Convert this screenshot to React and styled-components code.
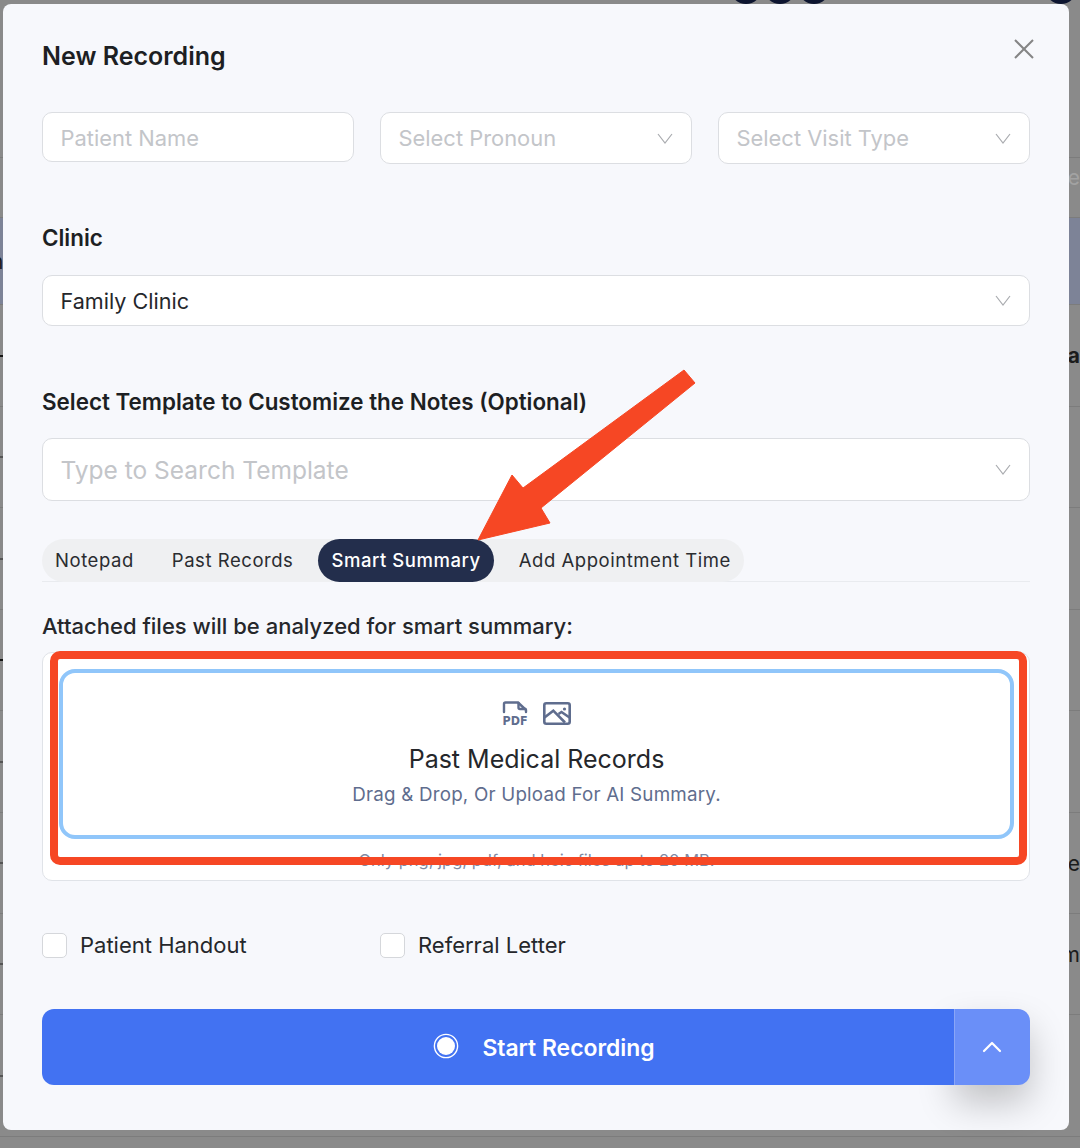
import React from "react";
import styled, { createGlobalStyle } from "styled-components";

const GlobalStyle = createGlobalStyle`
  html, body {
    margin: 0;
    padding: 0;
    background: #8a8a8a;
  }
  body {
    font-family: Inter, "Liberation Sans", sans-serif;
    overflow: hidden;
  }
`;

const backdropRows = [
  { height: 158 },
  { height: 60, right: "e", color: "#a2a2a2", offset: -20 },
  { height: 87, tint: true, left: "n" },
  { height: 102, right: "a", bold: true, bar: true },
  { height: 101, dot: true },
  { height: 102, dot: true },
  { height: 101, bar: true },
  { height: 102, dot: true },
  { height: 101, right: "e", dot: true },
  { height: 101, right: "m", offset: -20, dot: true },
  { height: 122, dot: true },
];

function Chevron() {
  return (
    <ChevronIcon viewBox="0 0 16 11">
      <polyline points="1,1 8,10 15,1" />
    </ChevronIcon>
  );
}

function PdfIcon() {
  return (
    <FileIcon viewBox="0 0 26 25">
      <path d="M2 11 V3 Q2 1.5 3.5 1.5 H16 L24 9 V11" />
      <path d="M16.5 2 V6.5 Q16.5 8 18 8 H23.5" />
      <text x="0.5" y="24" textLength="25" lengthAdjust="spacingAndGlyphs">PDF</text>
    </FileIcon>
  );
}

function ImageIcon() {
  return (
    <PictureIcon viewBox="0 0 28 23">
      <rect x="1.3" y="1.3" width="25.4" height="20.4" rx="2" />
      <path d="M1.5 15.5 L10.3 8.7 L22 20.5" />
      <path d="M15.5 12 L18.5 10 L26.5 15.5" />
      <circle cx="21.5" cy="7" r="1.6" />
    </PictureIcon>
  );
}

function App() {
  return (
    <>
      <GlobalStyle />
      <Backdrop>
        <Avatars>
          <Avatar />
          <Avatar />
          <Avatar />
          <Avatar $last />
        </Avatars>
        {backdropRows.map((row, i) => (
          <BackRow key={i} $height={row.height} $tint={row.tint} $color={row.color} $bold={row.bold}>
            <BackLeft>
              {row.left}
              {row.bar && <Mark $wide />}
              {row.dot && <Mark />}
            </BackLeft>
            <BackRight $offset={row.offset}>{row.right}</BackRight>
          </BackRow>
        ))}
      </Backdrop>

      <Modal>
        <CloseButton viewBox="0 0 20 20">
          <path d="M1 1 L19 19 M19 1 L1 19" />
        </CloseButton>
        <Title>New Recording</Title>

        <TopRow>
          <Field $height={50} $nudge={2}>
            <Placeholder>Patient Name</Placeholder>
          </Field>
          <Field $height={52}>
            <Placeholder>Select Pronoun</Placeholder>
            <Chevron />
          </Field>
          <Field $height={52}>
            <Placeholder>Select Visit Type</Placeholder>
            <Chevron />
          </Field>
        </TopRow>

        <Label $top={61}>Clinic</Label>
        <Field $height={51} $top={24}>
          <Value>Family Clinic</Value>
          <Chevron />
        </Field>

        <Label $top={63}>Select Template to Customize the Notes (Optional)</Label>
        <Field $height={63} $top={23}>
          <Placeholder $large>Type to Search Template</Placeholder>
          <Chevron />
        </Field>

        <TabBar>
          <Tabs>
            <Tab>Notepad</Tab>
            <Tab>Past Records</Tab>
            <Tab $active>Smart Summary</Tab>
            <Tab>Add Appointment Time</Tab>
          </Tabs>
        </TabBar>

        <AttachLabel>Attached files will be analyzed for smart summary:</AttachLabel>
        <DropOuter>
          <DropInner>
            <IconRow>
              <PdfIcon />
              <ImageIcon />
            </IconRow>
            <DropTitle>Past Medical Records</DropTitle>
            <DropSub>Drag &amp; Drop, Or Upload For AI Summary.</DropSub>
          </DropInner>
          <DropHint>Only png, jpg, pdf, and heic files up to 20 MB.</DropHint>
        </DropOuter>

        <Checks>
          <CheckItem>
            <CheckBox />
            <CheckText>Patient Handout</CheckText>
          </CheckItem>
          <CheckItem>
            <CheckBox />
            <CheckText>Referral Letter</CheckText>
          </CheckItem>
        </Checks>

        <RecordBar>
          <RecordMain>
            <RecordIcon viewBox="0 0 26 26">
              <circle cx="13" cy="13" r="11.6" />
              <circle className="dot" cx="13" cy="13" r="9" />
            </RecordIcon>
            <RecordText>Start Recording</RecordText>
          </RecordMain>
          <RecordToggle>
            <svg width="20" height="12" viewBox="0 0 20 12">
              <polyline points="2,10 10,2 18,10" />
            </svg>
          </RecordToggle>
        </RecordBar>
      </Modal>

      <Highlight />
      <Arrow viewBox="0 0 1080 1148">
        <polygon
          points="684,370 695,383 541,508 550,523 478,540 512,475 523,488"
          strokeLinejoin="round"
        />
      </Arrow>
    </>
  );
}

const Backdrop = styled.div`
  width: 1080px;
  height: 1148px;
  overflow: hidden;
  position: relative;
`;

const Avatars = styled.div`
  position: absolute;
  top: -28px;
  left: 730px;
  display: flex;
  gap: 2px;
`;

const Avatar = styled.div`
  width: 32px;
  height: 32px;
  margin-left: ${(p) => (p.$last ? 213 : 0)}px;
  border-radius: 50%;
  background: #0d1530;
`;

const BackRow = styled.div`
  height: ${(p) => p.$height}px;
  box-sizing: border-box;
  border-bottom: 1px solid #7c7c7c;
  background: ${(p) => (p.$tint ? "#7d8397" : "transparent")};
  display: flex;
  align-items: center;
  justify-content: space-between;
  color: ${(p) => p.$color || "#1c1c1c"};
  font-size: 21px;
  font-weight: ${(p) => (p.$bold ? 700 : 400)};
`;

const BackLeft = styled.span`
  margin-left: -9px;
  display: flex;
  align-items: center;
`;

const BackRight = styled.span`
  margin-top: ${(p) => p.$offset || 0}px;
`;

const Mark = styled.i`
  display: block;
  margin-left: 9px;
  width: 3px;
  height: 2px;
  background: ${(p) => (p.$wide ? "#151515" : "#555")};
`;

const Modal = styled.div`
  position: absolute;
  top: 4px;
  left: 3px;
  width: 1066px;
  height: 1126px;
  box-sizing: border-box;
  padding: 0 39px;
  background: #f7f8fc;
  border-radius: 8px;
`;

const CloseButton = styled.svg`
  position: absolute;
  top: 35px;
  right: 35px;
  width: 20px;
  height: 20px;
  path {
    stroke: #858585;
    stroke-width: 2;
    fill: none;
  }
`;

const Title = styled.h2`
  margin: 0;
  padding-top: 37px;
  font-size: 25px;
  line-height: 30px;
  font-weight: 600;
  color: #1d1f23;
`;

const TopRow = styled.div`
  display: grid;
  grid-template-columns: repeat(3, 312px);
  gap: 26px;
  align-items: start;
  margin-top: 41px;
`;

const Field = styled.div`
  height: ${(p) => p.$height}px;
  margin-top: ${(p) => p.$top || 0}px;
  box-sizing: border-box;
  background: #fff;
  border: 1px solid #dcdee2;
  border-radius: 10px;
  padding: ${(p) => p.$nudge || 0}px 18px 0 17.5px;
  display: flex;
  align-items: center;
  justify-content: space-between;
`;

const Placeholder = styled.span`
  font-size: ${(p) => (p.$large ? 24.5 : 21.9)}px;
  color: #c3c5c9;
`;

const Value = styled.span`
  font-size: 21.6px;
  color: #25272b;
`;

const ChevronIcon = styled.svg`
  width: 16px;
  height: 11px;
  polyline {
    fill: none;
    stroke: #a9abaf;
    stroke-width: 1.2;
  }
`;

const Label = styled.div`
  margin-top: ${(p) => p.$top}px;
  font-size: 22.4px;
  line-height: 26px;
  font-weight: 600;
  color: #1d1f23;
`;

const TabBar = styled.div`
  margin-top: 38px;
  height: 43px;
  box-sizing: border-box;
  border-bottom: 1px solid #e9ebef;
`;

const Tabs = styled.div`
  display: inline-flex;
  gap: 12px;
  height: 43px;
  background: #eff0f2;
  border-radius: 22px;
`;

const Tab = styled.div`
  display: flex;
  align-items: center;
  padding: 0 13px 2px;
  border-radius: 22px;
  font-size: 18.5px;
  font-weight: ${(p) => (p.$active ? 500 : 400)};
  letter-spacing: 0.55px;
  color: ${(p) => (p.$active ? "#fff" : "#2a2c30")};
  background: ${(p) => (p.$active ? "#232e4c" : "transparent")};
`;

const AttachLabel = styled.div`
  margin-top: 31px;
  font-size: 22px;
  line-height: 26px;
  font-weight: 500;
  color: #25272b;
`;

const DropOuter = styled.div`
  margin-top: 13px;
  height: 229px;
  box-sizing: border-box;
  background: #fff;
  border: 1px solid #e0e3e8;
  border-radius: 10px;
  padding: 16px 15px 0 16px;
`;

const DropInner = styled.div`
  height: 170px;
  box-sizing: border-box;
  border: 4px solid #90c6fa;
  border-radius: 16px;
  padding-top: 24px;
  display: flex;
  flex-direction: column;
  align-items: center;
`;

const IconRow = styled.div`
  display: flex;
  align-items: center;
  gap: 15px;
  height: 32px;
`;

const FileIcon = styled.svg`
  width: 26px;
  height: 25px;
  overflow: visible;
  path {
    fill: none;
    stroke: #5f6d8e;
    stroke-width: 2.4;
    stroke-linejoin: round;
    stroke-linecap: round;
  }
  text {
    font-family: "DejaVu Sans", sans-serif;
    font-size: 12.5px;
    font-weight: 700;
    fill: #5f6d8e;
  }
`;

const PictureIcon = styled.svg`
  width: 28px;
  height: 23px;
  rect,
  path {
    fill: none;
    stroke: #5f6d8e;
    stroke-width: 2.6;
  }
  circle {
    fill: #5f6d8e;
  }
`;

const DropTitle = styled.div`
  margin-top: 14px;
  font-size: 25px;
  line-height: 32px;
  color: #25272b;
`;

const DropSub = styled.div`
  margin-top: 8px;
  font-size: 18.8px;
  line-height: 24px;
  letter-spacing: 0.2px;
  color: #5f6d8e;
`;

const DropHint = styled.div`
  margin-top: 11px;
  text-align: center;
  font-size: 16.5px;
  line-height: 20px;
  color: #7f8aa3;
`;

const Checks = styled.div`
  display: grid;
  grid-template-columns: repeat(3, 312px);
  gap: 26px;
  margin-top: 51px;
`;

const CheckItem = styled.div`
  display: flex;
  align-items: center;
  gap: 13px;
`;

const CheckBox = styled.div`
  width: 25px;
  height: 25px;
  box-sizing: border-box;
  background: #fff;
  border: 1px solid #d5d7db;
  border-radius: 5px;
`;

const CheckText = styled.span`
  font-size: 22px;
  color: #25272b;
`;

const RecordBar = styled.div`
  margin-top: 51px;
  height: 76px;
  display: flex;
`;

const RecordMain = styled.div`
  flex: 1;
  position: relative;
  z-index: 1;
  display: flex;
  align-items: center;
  justify-content: center;
  gap: 23px;
  padding-left: 92px;
  background: #4272f2;
  border-radius: 12px 0 0 12px;
`;

const RecordIcon = styled.svg`
  width: 26px;
  height: 26px;
  margin-top: -2px;
  circle {
    fill: none;
    stroke: #fff;
    stroke-width: 1.4;
  }
  circle.dot {
    fill: #fff;
    stroke: none;
  }
`;

const RecordText = styled.span`
  padding-top: 2px;
  font-size: 22.9px;
  font-weight: 600;
  color: #fff;
`;

const RecordToggle = styled.div`
  width: 76px;
  box-sizing: border-box;
  border-left: 1px solid #8aa6f7;
  border-radius: 0 12px 12px 0;
  background: #6a8ff8;
  box-shadow: 0 18px 36px rgba(0, 0, 0, 0.22);
  padding-right: 2px;
  display: flex;
  align-items: center;
  justify-content: center;
  polyline {
    fill: none;
    stroke: #fff;
    stroke-width: 2.2;
    stroke-linecap: round;
    stroke-linejoin: round;
  }
`;

/* annotation layer drawn on the screenshot */
const Highlight = styled.div`
  position: absolute;
  left: 50px;
  top: 651px;
  width: 977px;
  height: 214px;
  box-sizing: border-box;
  border: 8px solid #f64724;
  border-radius: 10px;
`;

const Arrow = styled.svg`
  position: absolute;
  left: 0;
  top: 0;
  width: 1080px;
  height: 1148px;
  pointer-events: none;
  polygon {
    fill: #f64724;
    stroke: #f64724;
    stroke-width: 1;
  }
`;

export default App;
